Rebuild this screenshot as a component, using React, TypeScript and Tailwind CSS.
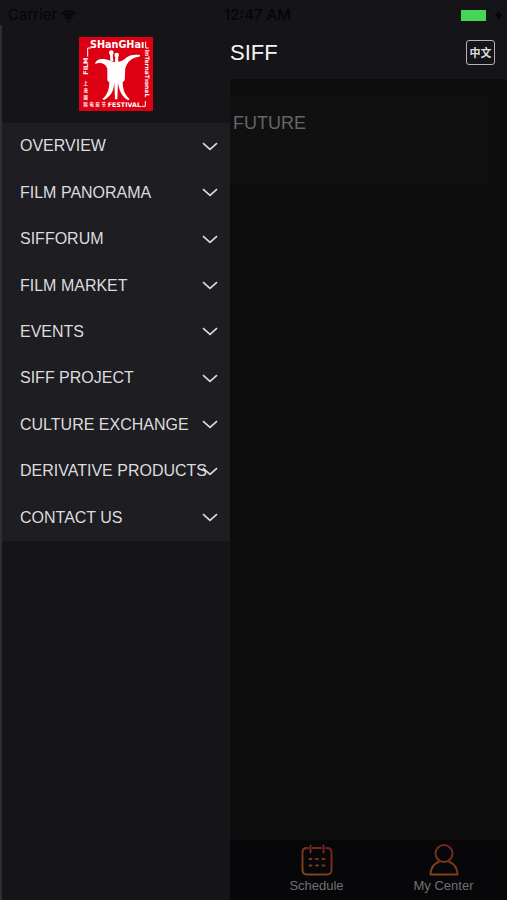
import { useState } from "react";
import { Wifi, Zap } from "lucide-react";

interface MenuItem {
  id: string;
  label: string;
}

const MENU_ITEMS: MenuItem[] = [
  { id: "overview", label: "OVERVIEW" },
  { id: "panorama", label: "FILM PANORAMA" },
  { id: "forum", label: "SIFFORUM" },
  { id: "market", label: "FILM MARKET" },
  { id: "events", label: "EVENTS" },
  { id: "project", label: "SIFF PROJECT" },
  { id: "culture", label: "CULTURE EXCHANGE" },
  { id: "products", label: "DERIVATIVE PRODUCTS" },
  { id: "contact", label: "CONTACT US" },
];

function FestivalLogo() {
  return (
    <svg viewBox="0 0 222 222" className="size-[74px]" role="img" aria-label="Shanghai International Film Festival">
      <rect width="222" height="222" fill="#dc0012" />
      <g fill="#fff" className="font-['DejaVu_Sans',sans-serif] font-bold">
        <text x="33" y="33" fontSize="29">SHanGHaı</text>
        <text transform="translate(197 38) rotate(90)" fontSize="18">InTernaTıonaL</text>
        <text transform="translate(27 113) rotate(-90)" fontSize="19">FILM</text>
        <text x="86" y="209" fontSize="19">FESTIVAL</text>
      </g>
      <g fill="#fff" fontSize="13" textAnchor="middle" className="font-['Noto_Sans_CJK_SC',sans-serif] font-bold">
        <text x="20" y="145">上</text>
        <text x="20" y="166">海</text>
        <text x="20" y="187">国</text>
        <text x="20" y="208">际</text>
        <text x="38" y="208">电</text>
        <text x="56" y="208">影</text>
        <text x="74" y="208">节</text>
      </g>
      <g fill="none" stroke="#fff" strokeWidth="3">
        <path d="M36 33H26V59" />
        <path d="M200 14V33H209" />
        <path d="M188 208H199V192" />
      </g>
      {/* bronze wine vessel */}
      <g fill="#fff">
        <circle cx="97" cy="47" r="7" />
        <circle cx="113" cy="54" r="7" />
        <path d="M93 48h8l2 24h-9zM109 54h8l1 22h-10z" />
        <path d="M48 80C53 65 68 64 80 67C91 70 99 75 111 75C124 76 133 70 143 61C154 53 168 52 183 54C184 58 181 60 176 60C157 63 144 76 139 94L137 130C132 136 126 138 121 139L101 139C93 138 88 135 85 130V96C82 84 72 78 62 78C57 78 53 81 48 80Z" />
        <path d="M91 134H106C106 159 96 178 75 189L70 186C85 174 91 156 91 134Z" />
        <path d="M106 136H117L115 187H108Z" />
        <path d="M117 134H131C131 158 138 174 152 186L148 190C129 179 119 160 117 134Z" />
      </g>
    </svg>
  );
}

function Chevron({ open }: { open: boolean }) {
  return (
    <svg viewBox="0 0 16 9" className={`h-[9px] w-4 shrink-0 ${open ? "rotate-180" : ""}`} fill="none" stroke="#dcdcdf" strokeWidth="1.6" aria-hidden="true">
      <path d="M1 1.2L8 7.4L15 1.2" />
    </svg>
  );
}

function StatusBar() {
  return (
    <div className="grid h-[25px] grid-cols-3 items-center bg-[#151418] pt-1 pl-2 font-['Inter',sans-serif] text-[15px] text-[#050507]">
      <div className="flex items-center gap-1">
        <span>Carrier</span>
        <Wifi size={15} strokeWidth={3} />
      </div>
      <div className="text-center font-medium">12:47 AM</div>
      <div className="flex items-center justify-end gap-2 pr-1">
        <div className="h-[11px] w-[25px] bg-[#45d656]" />
        <Zap size={9} fill="currentColor" />
      </div>
    </div>
  );
}

function ScheduleIcon() {
  return (
    <svg viewBox="0 0 32 32" className="size-8" fill="none" stroke="url(#schedule-line)" strokeWidth="1.9" strokeLinecap="round" aria-hidden="true">
      <defs>
        <linearGradient id="schedule-line" gradientUnits="userSpaceOnUse" x1="28" y1="2" x2="8" y2="30">
          <stop offset="0" stopColor="#742020" />
          <stop offset="1" stopColor="#80461c" />
        </linearGradient>
      </defs>
      <path d="M7 4H6C3 4 1.5 5.500 1.500 8.500V26C1.500 29 3 30.500 6 30.500H26C29 30.500 30.500 29 30.500 26V8.500C30.500 5.500 29 4 26 4H25M12 4H20M9.500 1.500V8.500M22.500 1.500V8.500" />
      <path d="M8.500 15H10.500M15 15H17M21.500 15H23.500M8.500 21.500H10.500M15 21.500H17M21.500 21.500H23.500" strokeWidth="2" />
    </svg>
  );
}

function PersonIcon() {
  return (
    <svg viewBox="0 0 32 32" className="size-8" fill="none" stroke="url(#person-line)" strokeWidth="1.9" strokeLinejoin="round" aria-hidden="true">
      <defs>
        <linearGradient id="person-line" gradientUnits="userSpaceOnUse" x1="24" y1="1" x2="10" y2="31">
          <stop offset="0" stopColor="#742020" />
          <stop offset="1" stopColor="#80461c" />
        </linearGradient>
      </defs>
      <circle cx="16" cy="9.500" r="8.500" />
      <path d="M11.500 17.500C6.500 19.500 2.500 24 2.500 30.500H29.500C29.500 24 25.500 19.500 20.500 17.500" />
    </svg>
  );
}

export default function App() {
  const [openId, setOpenId] = useState<string | null>(null);

  return (
    <div className="flex min-h-screen flex-col bg-[#0d0d0e] font-['Liberation_Sans',sans-serif]">
      <StatusBar />

      <div className="flex flex-1">
        <aside className="w-[230px] shrink-0 border-l-2 border-[#2f2e32] bg-[#151418]">
          <div className="flex h-[98px] justify-center pt-3">
            <FestivalLogo />
          </div>
          <nav className="grid h-[418px] auto-rows-fr grid-cols-1 bg-[#1e1d22]">
            {MENU_ITEMS.map((item) => (
              <button
                key={item.id}
                type="button"
                aria-expanded={openId === item.id}
                onClick={() => setOpenId(openId === item.id ? null : item.id)}
                className="flex items-center justify-between pr-3 pl-[18px] text-left text-base text-[#dcdcdf]"
              >
                <span className="min-w-0 whitespace-nowrap">{item.label}</span>
                <Chevron open={openId === item.id} />
              </button>
            ))}
          </nav>
        </aside>

        <div className="flex min-w-0 flex-1 flex-col">
          <header className="flex h-[54px] items-center justify-between bg-[#151418] pr-3">
            <h1 className="text-[22px] text-[#f4f4f5]">SIFF</h1>
            <button
              type="button"
              className="flex h-[25px] w-[29px] items-center justify-center rounded-[3px] border border-[#b4b4b8] font-['Noto_Sans_CJK_SC',sans-serif] text-[11px] font-bold text-[#dcdcdf]"
            >
              中文
            </button>
          </header>

          <main className="flex-1 pt-[17px] pr-[18px]">
            <section className="h-[88px] bg-[#101011] pt-3 pl-[3px]">
              <h2 className="text-lg/[30px] text-[#656567]">FUTURE</h2>
            </section>
          </main>

          <footer className="flex h-[60px] bg-[#070709] pl-[23px] text-[13px] text-[#717173]">
            <a href="#schedule" className="flex flex-1 flex-col items-center pt-1">
              <ScheduleIcon />
              <span>Schedule</span>
            </a>
            <a href="#my-center" className="flex flex-1 flex-col items-center pt-1">
              <PersonIcon />
              <span>My Center</span>
            </a>
          </footer>
        </div>
      </div>
    </div>
  );
}
